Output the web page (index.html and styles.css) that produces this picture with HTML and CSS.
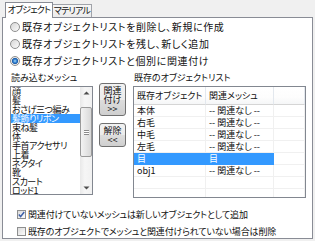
FILE: index.html
```html
<!DOCTYPE html>
<html lang="ja">
<head>
<meta charset="utf-8">
<link rel="stylesheet" href="styles.css">
</head>
<body>
<div class="tabs">
  <div class="tab active">オブジェクト</div>
  <div class="tab">マテリアル</div>
</div>
<div class="panel">
  <div class="radios">
    <div class="opt"><span class="radio"></span>既存オブジェクトリストを削除し、新規に作成</div>
    <div class="opt"><span class="radio"></span>既存オブジェクトリストを残し、新しく追加</div>
    <div class="opt"><span class="radio on"></span>既存オブジェクトリストと個別に関連付け</div>
  </div>
  <div class="main">
    <div class="col-left">
      <div class="cap">読み込むメッシュ</div>
      <div class="listbox">
        <ul class="items">
          <li>顔</li>
          <li>髪</li>
          <li>おさげ三つ編み</li>
          <li class="sel">髪飾りリボン</li>
          <li>束ね髪</li>
          <li>体</li>
          <li>手首アクセサリ</li>
          <li>上着</li>
          <li>ネクタイ</li>
          <li>靴</li>
          <li>スカート</li>
          <li>ロッド1</li>
        </ul>
        <div class="vscroll">
          <div class="arrow"><svg width="7" height="4" viewBox="0 0 7 4"><path d="M0.5 3.5 L3.5 0.5 L6.5 3.5 Z" fill="#4d4d4d"/></svg></div>
          <div class="thumb"><span class="grip"></span></div>
          <div class="spacer"></div>
          <div class="arrow"><svg width="7" height="4" viewBox="0 0 7 4"><path d="M0.5 0.5 L3.5 3.5 L6.5 0.5 Z" fill="#4d4d4d"/></svg></div>
        </div>
      </div>
    </div>
    <div class="btns">
      <button class="btn b1">関連<br>付け<br>&gt;&gt;</button>
      <button class="btn b2">解除<br>&lt;&lt;</button>
    </div>
    <div class="col-right">
      <div class="cap">既存のオブジェクトリスト</div>
      <div class="lv">
        <div class="lv-row lv-head"><span class="c1">既存オブジェクト</span><span class="c2">関連メッシュ</span><span class="c3"></span></div>
        <div class="lv-row"><span class="c1">本体</span><span class="c2">-- 関連なし --</span><span class="c3"></span></div>
        <div class="lv-row"><span class="c1">右毛</span><span class="c2">-- 関連なし --</span><span class="c3"></span></div>
        <div class="lv-row"><span class="c1">中毛</span><span class="c2">-- 関連なし --</span><span class="c3"></span></div>
        <div class="lv-row"><span class="c1">左毛</span><span class="c2">-- 関連なし --</span><span class="c3"></span></div>
        <div class="lv-row sel"><span class="c1">目</span><span class="c2">目</span><span class="c3"></span></div>
        <div class="lv-row"><span class="c1">obj1</span><span class="c2">-- 関連なし --</span><span class="c3"></span></div>
        <div class="lv-row"><span class="c1"></span><span class="c2"></span><span class="c3"></span></div>
        <div class="lv-row"><span class="c1"></span><span class="c2"></span><span class="c3"></span></div>
      </div>
    </div>
  </div>
  <div class="checks">
    <div class="opt"><span class="check on"><svg width="7" height="7" viewBox="0 0 7 7"><path d="M0.8 3.6 L2.6 5.6 L6.2 1" fill="none" stroke="#3c5fa8" stroke-width="1.5"/></svg></span>関連付けていないメッシュは新しいオブジェクトとして追加</div>
    <div class="opt"><span class="check"></span>既存のオブジェクトでメッシュと関連付けられていない場合は削除</div>
  </div>
</div>
</body>
</html>
```

FILE: styles.css
```css
* { box-sizing: border-box; }
html, body { margin: 0; padding: 0; }
body {
  width: 315px;
  height: 241px;
  overflow: hidden;
  background: #f0f0f0;
  font-family: "Noto Sans CJK JP", "DejaVu Sans", sans-serif;
  font-size: 9px;
  font-feature-settings: "palt";
  color: #111;
}
.tabs {
  display: flex;
  align-items: flex-end;
  height: 17px;
  padding-left: 5px;
}
.tab {
  height: 13px;
  width: 40px;
  margin-left: -1px;
  border: 1px solid #a0a3a9;
  border-bottom: 0;
  background: linear-gradient(#f6f6f6, #ececec);
  text-align: center;
  line-height: 12px;
  letter-spacing: -0.8px;
  white-space: nowrap;
}
.tab.active {
  position: relative;
  z-index: 1;
  height: 16px;
  width: 48px;
  margin-left: 0;
  margin-bottom: -1px;
  background: #fff;
  border-color: #898c95;
  line-height: 14px;
}
.panel {
  margin: 0 2px;
  height: 222px;
  border: 1px solid #898c95;
  background: #fff;
}
.radios {
  padding-left: 7px;
  font-size: 10px;
  letter-spacing: 0.6px;
}
.opt {
  display: flex;
  align-items: center;
  height: 17px;
  white-space: nowrap;
}
.radio {
  flex: none;
  width: 10px;
  height: 10px;
  margin-right: 2px;
  border: 1px solid #8e8f8f;
  border-radius: 50%;
  background: linear-gradient(135deg, #d6d6d6, #fbfbfb);
}
.radio.on {
  background: radial-gradient(circle, #a5ddfb 0, #3b86d2 1.6px, #1c5aa6 2.8px, #e4e4e4 3.3px, #fbfbfb 100%);
}
.main {
  display: flex;
  margin-top: 1px;
  padding-left: 7px;
}
.cap {
  height: 16px;
  line-height: 16px;
  padding-left: 1px;
  white-space: nowrap;
}
.col-left { width: 83px; }
.listbox {
  display: flex;
  height: 109px;
  border: 1px solid #828790;
  background: #fff;
}
.items {
  flex: 1;
  margin: 0;
  padding: 0;
  list-style: none;
  overflow: hidden;
  letter-spacing: -0.5px;
}
.items li {
  height: 9px;
  line-height: 9px;
  padding-left: 1px;
  white-space: nowrap;
}
.items li.sel { background: #3399ff; color: #fff; }
.vscroll {
  width: 12px;
  display: flex;
  flex-direction: column;
  background: linear-gradient(90deg, #e9e9e9, #f6f6f6 40%, #f1f1f1);
}
.arrow {
  height: 12px;
  display: flex;
  align-items: center;
  justify-content: center;
}
.thumb {
  margin: 8px 0 0 0;
  height: 50px;
  border: 1px solid #9a9a9a;
  border-radius: 2px;
  background: linear-gradient(90deg, #f3f3f3, #e6e6e6 50%, #d8d8d8);
  display: flex;
  align-items: center;
  justify-content: center;
}
.grip {
  width: 5px;
  height: 5px;
  border-top: 1px solid #8a8a8a;
  border-bottom: 1px solid #8a8a8a;
  background: linear-gradient(#fff 0 1px, #8a8a8a 1px 2px, #fff 2px);
  background-size: 100% 2px;
}
.spacer { flex: 1; }
.btns {
  display: flex;
  flex-direction: column;
  gap: 7px;
  width: 27px;
  margin-left: 6px;
  padding-top: 13px;
}
.btn {
  width: 27px;
  padding: 0;
  font: inherit;
  font-feature-settings: "palt";
  line-height: 9px;
  color: #111;
  border: 1px solid #707070;
  border-radius: 3px;
  background: linear-gradient(#f2f2f2 0%, #ebebeb 50%, #dddddd 51%, #cfcfcf 100%);
}
.b1 { height: 33px; }
.b2 { height: 24px; }
.col-right {
  width: 173px;
  margin-left: 7px;
}
.lv {
  height: 112px;
  border: 1px solid #828790;
  background: #fff;
  overflow: hidden;
}
.lv-row {
  display: flex;
  height: 12px;
  line-height: 11px;
  white-space: nowrap;
}
.lv-row span {
  padding-left: 3px;
  border-right: 1px solid #f0f0f0;
  border-bottom: 1px solid #f0f0f0;
}
.c1 { width: 72px; }
.c2 { width: 68px; }
.c3 { flex: 1; }
.lv-head {
  height: 18px;
  line-height: 17px;
}
.lv-head span {
  border-right: 1px solid #e3e8ee;
  border-bottom: 1px solid #d5d5d5;
  background: linear-gradient(#fff, #fdfdfd 60%, #f5f6f7);
}
.lv-row.sel .c1, .lv-row.sel .c2 {
  background: #3399ff;
  color: #fff;
  border-color: #3399ff;
}
.checks {
  margin-top: 8px;
  padding-left: 14px;
  letter-spacing: -0.15px;
}
.check {
  flex: none;
  width: 9px;
  height: 9px;
  margin-right: 2px;
  border: 1px solid #8e8f8f;
  background: linear-gradient(135deg, #dcdcdc, #fbfbfb);
  display: flex;
  align-items: center;
  justify-content: center;
}
```
